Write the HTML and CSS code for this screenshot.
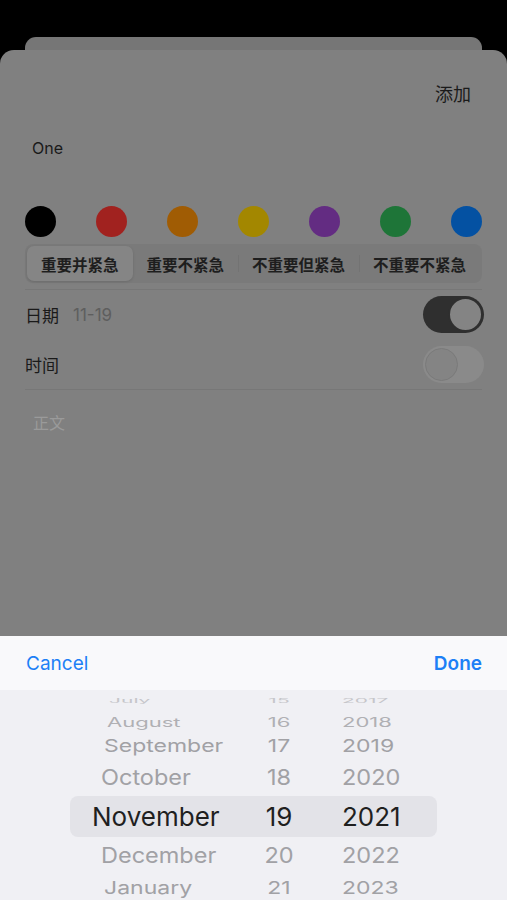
FILE: index.html
```html
<!DOCTYPE html>
<html lang="zh-CN">
<head>
    <meta charset="UTF-8">
    <meta name="viewport" content="width=device-width, initial-scale=1.0">
    <title>添加</title>
    <link rel="stylesheet" href="styles.css">
</head>
<body>
    <div class="back-card"></div>

    <div class="sheet">
        <div class="add">添加</div>
        <div class="title">One</div>

        <div class="colors">
            <span class="dot" style="background: #000"></span>
            <span class="dot" style="background: #a1221f"></span>
            <span class="dot" style="background: #a05c04"></span>
            <span class="dot" style="background: #a38700"></span>
            <span class="dot" style="background: #632c82"></span>
            <span class="dot" style="background: #1e7538"></span>
            <span class="dot" style="background: #0451a2"></span>
        </div>

        <div class="segmented">
            <div class="segment selected">重要并紧急</div>
            <div class="segment">重要不紧急</div>
            <div class="segment divided">不重要但紧急</div>
            <div class="segment divided">不重要不紧急</div>
        </div>

        <div class="divider"></div>

        <div class="row">
            <span class="label">日期</span>
            <span class="value">11-19</span>
            <span class="toggle on"><span class="knob"></span></span>
        </div>
        <div class="row second">
            <span class="label">时间</span>
            <span class="toggle"><span class="knob"></span></span>
        </div>

        <div class="divider"></div>

        <div class="body-text">正文</div>
    </div>

    <div class="picker">
        <div class="toolbar">
            <span class="action">Cancel</span>
            <span class="action done">Done</span>
        </div>
        <div class="wheel">
            <div class="wheel-row far3"><div class="cells"><span class="month">July</span><span class="day">15</span><span class="year">2017</span></div></div>
            <div class="wheel-row far2"><div class="cells"><span class="month">August</span><span class="day">16</span><span class="year">2018</span></div></div>
            <div class="wheel-row far1"><div class="cells"><span class="month">September</span><span class="day">17</span><span class="year">2019</span></div></div>
            <div class="wheel-row near"><div class="cells"><span class="month">October</span><span class="day">18</span><span class="year">2020</span></div></div>
            <div class="wheel-row current"><div class="cells"><span class="month">November</span><span class="day">19</span><span class="year">2021</span></div></div>
            <div class="wheel-row near"><div class="cells"><span class="month">December</span><span class="day">20</span><span class="year">2022</span></div></div>
            <div class="wheel-row far1"><div class="cells"><span class="month">January</span><span class="day">21</span><span class="year">2023</span></div></div>
        </div>
    </div>
</body>
</html>
```

FILE: styles.css
```css
body {
    margin: 0;
    height: 900px;
    overflow: hidden;
    background: #000;
    font-family: Inter, "Noto Sans CJK SC", sans-serif;
    display: flex;
    flex-direction: column;
}
.back-card {
    margin: 37px 25px 0;
    height: 13px;
    flex: none;
    border-radius: 11px 11px 0 0;
    background: #767676;
}
.sheet {
    flex: none;
    height: 556px;
    padding: 30px 25px 0;
    border-radius: 14px 14px 0 0;
    background: #808080;
    color: #1a1a1a;
}
.add {
    text-align: right;
    padding-right: 11px;
    font-size: 18px;
    line-height: 30px;
}
.title {
    margin-top: 23px;
    padding-left: 7px;
    font-size: 16px;
    line-height: 30px;
}
.colors {
    margin-top: 43px;
    display: flex;
    justify-content: space-between;
}
.dot {
    width: 31px;
    height: 31px;
    border-radius: 50%;
}
.segmented {
    margin-top: 7px;
    height: 39px;
    padding: 2px;
    box-sizing: border-box;
    display: flex;
    border-radius: 8px;
    background: #7a7a7a;
}
.segment {
    flex: 1 1 auto;
    position: relative;
    display: flex;
    align-items: center;
    justify-content: center;
    font-size: 15.5px;
    font-weight: 600;
    color: #1e1e1e;
    padding: 0 4px;
}
.segment.selected {
    background: #858585;
    border-radius: 7px;
    box-shadow: 0 1px 3px rgba(0, 0, 0, 0.12);
}
.segment.divided::before {
    content: "";
    position: absolute;
    left: 0;
    top: 9px;
    bottom: 9px;
    width: 1px;
    background: #737373;
}
.divider {
    margin-top: 6px;
    height: 1px;
    background: #777;
}
.row {
    margin-top: 6px;
    height: 37px;
    display: flex;
    align-items: center;
}
.row.second {
    margin-top: 13px;
}
.label {
    font-size: 17px;
}
.value {
    margin-left: 14px;
    font-size: 17px;
    color: #5e5e5e;
}
.toggle {
    margin-left: auto;
    margin-right: -2px;
    width: 61px;
    height: 37px;
    box-sizing: border-box;
    padding: 2px;
    border-radius: 19px;
    background: #8a8a8a;
    display: flex;
}
.knob {
    width: 33px;
    height: 33px;
    box-sizing: border-box;
    border-radius: 50%;
    background: #848484;
    border: 1px solid #7a7a7a;
}
.toggle.on {
    background: #2f2f2f;
    justify-content: flex-end;
}
.toggle.on .knob {
    border: 2px solid #2f2f2f;
    width: 35px;
    height: 35px;
    margin: -1px;
}
.body-text {
    margin-top: 21px;
    padding-left: 8px;
    font-size: 16px;
    line-height: 24px;
    color: #9a9a9a;
}
.picker {
    flex: none;
}
.toolbar {
    height: 54px;
    padding: 0 25px 0 26px;
    display: flex;
    align-items: center;
    justify-content: space-between;
    background: #f9f9fb;
}
.action {
    font-size: 19px;
    color: #1d80f6;
}
.action.done {
    font-weight: 600;
}
.wheel {
    height: 210px;
    overflow: hidden;
    background: #f0f0f4;
}
.wheel-row {
    display: flex;
    align-items: center;
    font-size: 26px;
    color: #a1a1a5;
}
.cells {
    margin-left: 70px;
    width: 367px;
    height: 100%;
    display: grid;
    grid-template-columns: 172px 74px 121px;
    align-items: center;
}
.month {
    padding-left: 31px;
}
.day {
    text-align: center;
}
.year {
    padding-left: 26px;
}
.far3 {
    height: 20px;
    font-size: 21px;
    color: #c6c6ca;
    transform: scaleY(0.28);
}
.far3 .month {
    padding-left: 39px;
}
.far2 {
    height: 22px;
    font-size: 22px;
    color: #b0b0b4;
    transform: scaleY(0.57);
}
.far2 .month {
    padding-left: 37px;
}
.far1 {
    height: 27px;
    font-size: 23px;
    transform: scaleY(0.78);
}
.far1 .month {
    padding-left: 34px;
}
.near {
    height: 37px;
    font-size: 23.5px;
    transform: scaleY(0.9);
}
.current {
    height: 41px;
    color: #1f1f1f;
}
.current .month {
    padding-left: 22px;
}
.current .cells {
    border-radius: 8px;
    background: #e3e3e8;
}
```
